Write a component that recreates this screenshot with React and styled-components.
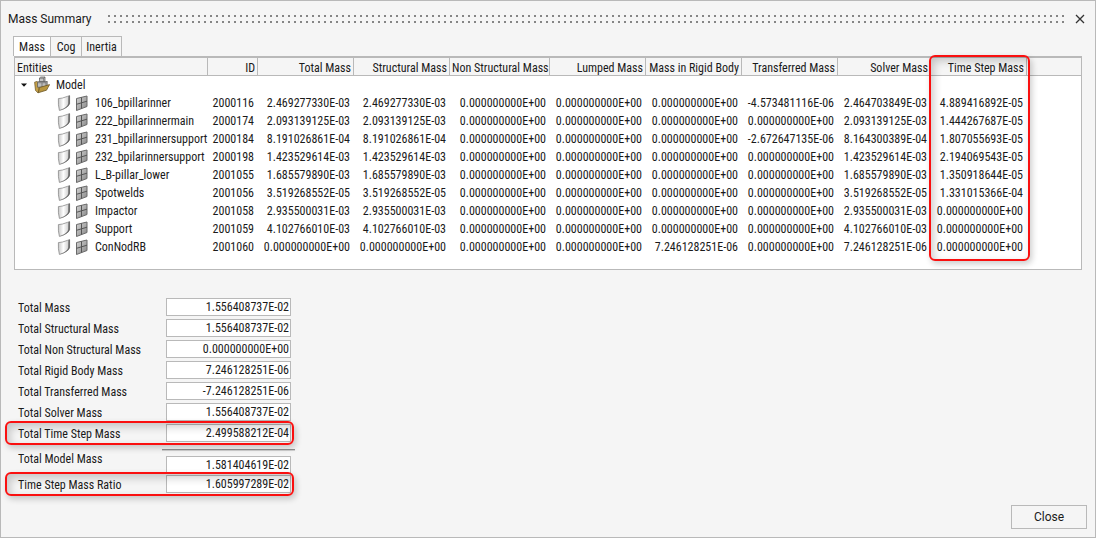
import React from "react";
import styled, { createGlobalStyle, css } from "styled-components";

const GlobalStyle = createGlobalStyle`
  *, *::before, *::after { box-sizing: border-box; }
  body {
    margin: 0;
    background: #f5f5f5;
    color: #1a1a1a;
    font: 12px/18px "Roboto Condensed", "Liberation Sans", sans-serif;
  }
`;

const LINE = "#b9b9b9";

const Dialog = styled.main`
  display: flex;
  flex-direction: column;
  min-height: 100vh;
  padding: 8px 8px 8px 7px;
  border: 1px solid ${LINE};
`;

const TitleBar = styled.header`
  display: flex;
  align-items: center;
  height: 20px;
  margin-right: -4px;
`;

const Title = styled.h1`
  width: 100px;
  margin: 0;
  font: 12px/22px Roboto, "Liberation Sans", sans-serif;
`;

const Grip = styled.div`
  flex: 1;
  height: 12px;
  margin-right: 5px;
  background: conic-gradient(from 270deg at 2px 2px, #858585 90deg, transparent 0) 0 2px / 6px 6px;
`;

const CloseIcon = styled.button`
  display: flex;
  align-items: center;
  justify-content: center;
  width: 22px;
  height: 20px;
  padding: 0;
  border: 0;
  background: none;
`;

const Tabs = styled.div`
  display: flex;
  height: 21px;
  margin: 7px 0 0 5px;
`;

const Tab = styled.button`
  height: 20px;
  width: ${(p) => p.$width}px;
  padding: 0;
  border: 1px solid ${LINE};
  border-bottom: 0;
  background: ${(p) => (p.$active ? "#fff" : "#f5f5f5")};
  color: inherit;
  font: inherit;
  & + & { border-left: 0; }
`;

const TablePanel = styled.section`
  margin: -1px 5px 0 6px;
  padding-bottom: 13px;
  border: 1px solid ${LINE};
  border-top-width: 2px;
  background: #fff;
`;

const Table = styled.table`
  width: 100%;
  table-layout: fixed;
  border-collapse: separate;
  border-spacing: 0;
  white-space: nowrap;
`;

const HeadCell = styled.th`
  height: 18px;
  padding: 4px 2px 0;
  border-right: 1px solid ${LINE};
  border-bottom: 1px solid ${LINE};
  background: #f5f5f5;
  font-weight: 400;
  line-height: 13px;
  text-align: ${(p) => (p.$left ? "left" : "right")};
  ${(p) => p.$marked && css`
    position: relative;
    z-index: 1;
  `}
  &:last-child { border-right: 0; }
`;

const NumberCell = styled.td`
  height: 18px;
  padding: 0 4px 0 0;
  text-align: right;
`;

const EntityCell = styled.th`
  height: 18px;
  padding: 0;
  font-weight: 400;
  text-align: left;
`;

const TreeItem = styled.div`
  display: flex;
  align-items: center;
  gap: ${(p) => (p.$root ? 6 : 4)}px;
  height: 18px;
  padding-left: ${(p) => (p.$root ? 5 : 42)}px;
  svg { flex: none; }
`;

const EntityName = styled.span`
  margin-left: ${(p) => (p.$root ? 0 : 2)}px;
`;

const highlight = css`
  position: absolute;
  border: 2px solid #fa1010;
  border-radius: 6px;
  box-shadow: 2px 3px 6px rgba(0, 0, 0, 0.2), inset 3px 4px 8px rgba(0, 0, 0, 0.2);
  pointer-events: none;
`;

const ColumnHighlight = styled.span`
  ${highlight}
  top: -3px;
  left: -2px;
  right: -4px;
  height: 206px;
`;

const RowHighlight = styled.span`
  ${highlight}
  inset: -3px;
`;

const Totals = styled.form`
  display: flex;
  flex-direction: column;
  gap: 3px;
  width: 287px;
  margin: 28px 0 12px;
`;

const Field = styled.div`
  position: relative;
  display: flex;
  justify-content: space-between;
  align-items: flex-end;
  width: 283px;
  height: ${(p) => (p.$raised ? 22 : 18)}px;
  padding-left: 10px;
`;

const Label = styled.label`
  align-self: flex-start;
  padding-top: ${(p) => (p.$raised ? 0 : 2)}px;
  line-height: ${(p) => (p.$raised ? 14 : 16)}px;
`;

const Value = styled.input`
  width: 125px;
  height: 18px;
  padding: 0 1px 0 0;
  border: 1px solid ${LINE};
  border-radius: 0;
  background: #fff;
  color: inherit;
  font: inherit;
  text-align: right;
  outline: 0;
`;

const Rule = styled.hr`
  width: 133px;
  height: 2px;
  margin: 4px 0 0 auto;
  border: 0;
  border-top: 1px solid #8f8f8f;
  border-bottom: 1px solid #d0d0d0;
`;

const SummaryGroup = styled.div`
  display: flex;
  flex-direction: column;
  gap: 1px;
`;

const Footer = styled.footer`
  display: flex;
  justify-content: flex-end;
  margin-top: auto;
`;

const CloseButton = styled.button`
  width: 76px;
  height: 24px;
  padding: 0;
  border: 1px solid ${LINE};
  background: #f5f5f5;
  color: inherit;
  font: 12px/22px Roboto, "Liberation Sans", sans-serif;
`;

const Gradients = styled.svg`
  position: absolute;
  width: 0;
  height: 0;
`;

const ShellIcon = () => (
  <svg width="14" height="18" viewBox="0 0 14 18" aria-hidden="true">
    <path d="M1.4 4.6 Q5 4.6 10.4 2.4 L12.6 1.6 V9.6 Q11 14 2.4 16.4 Q1 11 1.4 4.6Z" fill="url(#shell)" stroke="#8a8a8a" strokeWidth=".8" />
    <path d="M12.9 1.6 V9.6 Q11.4 14.2 2.4 16.7 Q10.6 13.4 11.2 9.4 L11.4 2.2Z" fill="#6a6a6a" />
  </svg>
);

const MeshIcon = () => (
  <svg width="14" height="18" viewBox="0 0 14 18" aria-hidden="true">
    <path d="M1.5 4.5 L12 2 V12.5 L1.5 16.5Z" fill="url(#mesh)" stroke="#6a6a6a" />
    <path d="M6.5 3.4 V14.6 M1.5 10.3 L12 7.2" stroke="#555" fill="none" />
  </svg>
);

const ModelIcon = () => (
  <svg width="16" height="18" viewBox="0 0 16 18" aria-hidden="true">
    <path d="M.6 6.2 L3 5.4 L5 7 V15 L4 16.8 L1.5 14.5Z" fill="#c4a048" stroke="#6b5524" strokeWidth=".7" />
    <path d="M5.5 2 L6.8 1 H11 V5 L9.8 6 H5.5Z" fill="#c4c4c4" stroke="#555" strokeWidth=".7" />
    <path d="M3.5 6.5 L4.6 5.5 H13.2 V10 L12 11.2 H3.5Z" fill="#bdbdbd" stroke="#555" strokeWidth=".7" />
    <path d="M5.5 2.2 H9.7 V5.8 M11 1 L9.7 2.2 M3.5 6.7 H12 V11 M8 6.7 V11 M12 6.7 L13.2 5.5" fill="none" stroke="#666" strokeWidth=".7" />
    <path d="M4 16.8 Q5.2 14 5.5 11.5 L15.6 8.6 Q14 11.5 12.5 14.2 Z" fill="#b8963f" stroke="#6b5524" strokeWidth=".8" />
  </svg>
);

const Expander = () => (
  <svg width="8" height="6" viewBox="0 0 8 6" aria-hidden="true">
    <path d="M1 1.5 H7 L4 4.8Z" fill="#111" />
  </svg>
);

const Z = "0.000000000E+00";

const columns = [
  ["ID", 50],
  ["Total Mass", 96],
  ["Structural Mass", 96],
  ["Non Structural Mass", 100],
  ["Lumped Mass", 96],
  ["Mass in Rigid Body", 96],
  ["Transferred Mass", 96],
  ["Solver Mass", 93],
  ["Time Step Mass", 96, true],
];

const rows = [
  ["106_bpillarinner", "2000116", "2.469277330E-03", "2.469277330E-03", Z, Z, Z, "-4.573481116E-06", "2.464703849E-03", "4.889416892E-05"],
  ["222_bpillarinnermain", "2000174", "2.093139125E-03", "2.093139125E-03", Z, Z, Z, Z, "2.093139125E-03", "1.444267687E-05"],
  ["231_bpillarinnersupport", "2000184", "8.191026861E-04", "8.191026861E-04", Z, Z, Z, "-2.672647135E-06", "8.164300389E-04", "1.807055693E-05"],
  ["232_bpilarinnersupport", "2000198", "1.423529614E-03", "1.423529614E-03", Z, Z, Z, Z, "1.423529614E-03", "2.194069543E-05"],
  ["L_B-pillar_lower", "2001055", "1.685579890E-03", "1.685579890E-03", Z, Z, Z, Z, "1.685579890E-03", "1.350918644E-05"],
  ["Spotwelds", "2001056", "3.519268552E-05", "3.519268552E-05", Z, Z, Z, Z, "3.519268552E-05", "1.331015366E-04"],
  ["Impactor", "2001058", "2.935500031E-03", "2.935500031E-03", Z, Z, Z, Z, "2.935500031E-03", Z],
  ["Support", "2001059", "4.102766010E-03", "4.102766010E-03", Z, Z, Z, Z, "4.102766010E-03", Z],
  ["ConNodRB", "2001060", Z, Z, Z, Z, "7.246128251E-06", Z, "7.246128251E-06", Z],
];

const totals = [
  ["Total Mass", "1.556408737E-02"],
  ["Total Structural Mass", "1.556408737E-02"],
  ["Total Non Structural Mass", Z],
  ["Total Rigid Body Mass", "7.246128251E-06"],
  ["Total Transferred Mass", "-7.246128251E-06"],
  ["Total Solver Mass", "1.556408737E-02"],
  ["Total Time Step Mass", "2.499588212E-04", true],
];

function TotalField({ label, value, marked, raised }) {
  const id = label.toLowerCase().replace(/ /g, "-");
  return (
    <Field $raised={raised}>
      <Label htmlFor={id} $raised={raised}>{label}</Label>
      <Value id={id} defaultValue={value} readOnly />
      {marked && <RowHighlight />}
    </Field>
  );
}

export default function App() {
  return (
    <Dialog>
      <GlobalStyle />
      <Gradients aria-hidden="true">
        <defs>
          <linearGradient id="shell">
            <stop offset="0" stopColor="#c8c8c8" />
            <stop offset=".45" stopColor="#fff" />
            <stop offset="1" stopColor="#c4c4c4" />
          </linearGradient>
          <linearGradient id="mesh" x2="1" y2="1">
            <stop offset="0" stopColor="#d5d5d5" />
            <stop offset="1" stopColor="#868686" />
          </linearGradient>
        </defs>
      </Gradients>
      <TitleBar>
        <Title>Mass Summary</Title>
        <Grip />
        <CloseIcon type="button" aria-label="Close window">
          <svg width="10" height="10" viewBox="0 0 10 10" aria-hidden="true">
            <path d="M1 1 L9 9 M9 1 L1 9" stroke="#333" strokeWidth="1.3" />
          </svg>
        </CloseIcon>
      </TitleBar>
      <Tabs role="tablist">
        <Tab type="button" role="tab" aria-selected="true" $active $width={38}>Mass</Tab>
        <Tab type="button" role="tab" aria-selected="false" $width={31}>Cog</Tab>
        <Tab type="button" role="tab" aria-selected="false" $width={40}>Inertia</Tab>
      </Tabs>
      <TablePanel>
        <Table>
          <colgroup>
            <col width="193" />
            {columns.map(([name, width]) => <col key={name} width={width} />)}
            <col />
          </colgroup>
          <thead>
            <tr>
              <HeadCell scope="col" $left>Entities</HeadCell>
              {columns.map(([name, , marked]) => (
                <HeadCell scope="col" key={name} $marked={marked}>
                  {name}
                  {marked && <ColumnHighlight />}
                </HeadCell>
              ))}
              <HeadCell as="td" />
            </tr>
          </thead>
          <tbody>
            <tr>
              <EntityCell scope="row" colSpan={11}>
                <TreeItem $root><Expander /><ModelIcon /><EntityName $root>Model</EntityName></TreeItem>
              </EntityCell>
            </tr>
            {rows.map(([name, ...cells]) => (
              <tr key={name}>
                <EntityCell scope="row">
                  <TreeItem><ShellIcon /><MeshIcon /><EntityName>{name}</EntityName></TreeItem>
                </EntityCell>
                {cells.map((cell, i) => <NumberCell key={i}>{cell}</NumberCell>)}
                <td />
              </tr>
            ))}
          </tbody>
        </Table>
      </TablePanel>
      <Totals>
        {totals.map(([label, value, marked]) => (
          <TotalField key={label} label={label} value={value} marked={marked} />
        ))}
        <SummaryGroup>
          <Rule />
          <TotalField label="Total Model Mass" value="1.581404619E-02" raised />
          <TotalField label="Time Step Mass Ratio" value="1.605997289E-02" marked />
        </SummaryGroup>
      </Totals>
      <Footer>
        <CloseButton type="button">Close</CloseButton>
      </Footer>
    </Dialog>
  );
}
